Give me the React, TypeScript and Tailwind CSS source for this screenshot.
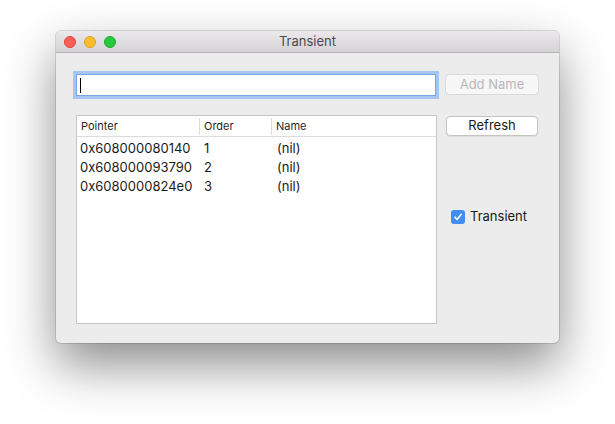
import React from "react";

const font = { fontFamily: "Inter, 'Liberation Sans', sans-serif" };

function Check() {
  return (
    <div className="w-[14px] h-[14px] rounded-[3px] bg-[#3d8ff4] flex items-center justify-center">
      <svg width="10" height="10" viewBox="0 0 10 10">
        <path d="M2 5.2 L4.1 7.5 L8.2 2.3" fill="none" stroke="white" strokeWidth="1.6" strokeLinecap="round" strokeLinejoin="round" />
      </svg>
    </div>
  );
}

const rows = [
  ["0x608000080140", "1", "(nil)"],
  ["0x608000093790", "2", "(nil)"],
  ["0x6080000824e0", "3", "(nil)"],
];

export default function App() {
  return (
    <div className="w-[615px] h-[424px] bg-white pt-[31px] pl-[56px] overflow-hidden" style={font}>
      <div className="w-[503px] h-[312px] rounded-[5px] bg-[#ececec] overflow-hidden flex flex-col shadow-[0_22px_50px_rgba(0,0,0,0.45),0_0_0_1px_rgba(0,0,0,0.12)]">
        <div className="relative h-[22px] shrink-0 bg-gradient-to-b from-[#ebe9eb] to-[#d4d2d4] border-b border-[#b3b3b3] flex items-center">
          <div className="flex gap-[8px] pl-[8px]">
            <div className="w-[12px] h-[12px] rounded-full bg-[#fc5f57] border border-[#e0443e]" />
            <div className="w-[12px] h-[12px] rounded-full bg-[#fdbc2e] border border-[#dea123]" />
            <div className="w-[12px] h-[12px] rounded-full bg-[#28c840] border border-[#1aab29]" />
          </div>
          <div className="absolute inset-0 flex items-center justify-center text-[13px] text-[#4b4b4b]">Transient</div>
        </div>
        <div className="flex-1 flex pl-[20px] pt-[21px] gap-[8px]">
          <div className="flex flex-col w-[361px]">
            <div className="h-[22px] w-[360px] bg-white border border-[#7aa7e4] shadow-[0_0_0_3px_#a5c6f0] flex items-center pl-[3px]">
              <div className="w-[1px] h-[15px] bg-black" />
            </div>
            <div className="mt-[19px] h-[209px] bg-white border border-[#c5c5c5] flex flex-col">
              <div className="h-[21px] flex items-center border-b border-[#dcdcdc] text-[11px] text-[#262626]">
                <div className="w-[123px] pl-[4px] h-[17px] flex items-center border-r border-[#dcdcdc]">Pointer</div>
                <div className="w-[72px] pl-[4px] h-[17px] flex items-center border-r border-[#dcdcdc]">Order</div>
                <div className="pl-[4px]">Name</div>
              </div>
              <div className="pt-[2px] text-[13px] text-[#1a1a1a]">
                {rows.map((r) => (
                  <div key={r[0]} className="h-[19px] flex items-center">
                    <div className="w-[123px] pl-[3px]">{r[0]}</div>
                    <div className="w-[73px] pl-[4px]">{r[1]}</div>
                    <div className="pl-[4px]">{r[2]}</div>
                  </div>
                ))}
              </div>
            </div>
          </div>
          <div className="flex flex-col">
            <div className="h-[21px] w-[94px] rounded-[4px] border border-[#d9d9d9] bg-[#f7f7f7] text-[13px] text-[#b7b7b7] flex items-center justify-center">Add Name</div>
            <div className="mt-[21px] ml-[1px] h-[20px] w-[92px] rounded-[4px] border border-[#c3c3c3] bg-white shadow-[0_1px_0_rgba(0,0,0,0.06)] text-[13px] text-[#1a1a1a] flex items-center justify-center">Refresh</div>
            <div className="mt-[71px] ml-[6px] flex items-center gap-[5px] text-[13px] text-[#1a1a1a]">
              <Check />
              <span>Transient</span>
            </div>
          </div>
        </div>
      </div>
    </div>
  );
}
